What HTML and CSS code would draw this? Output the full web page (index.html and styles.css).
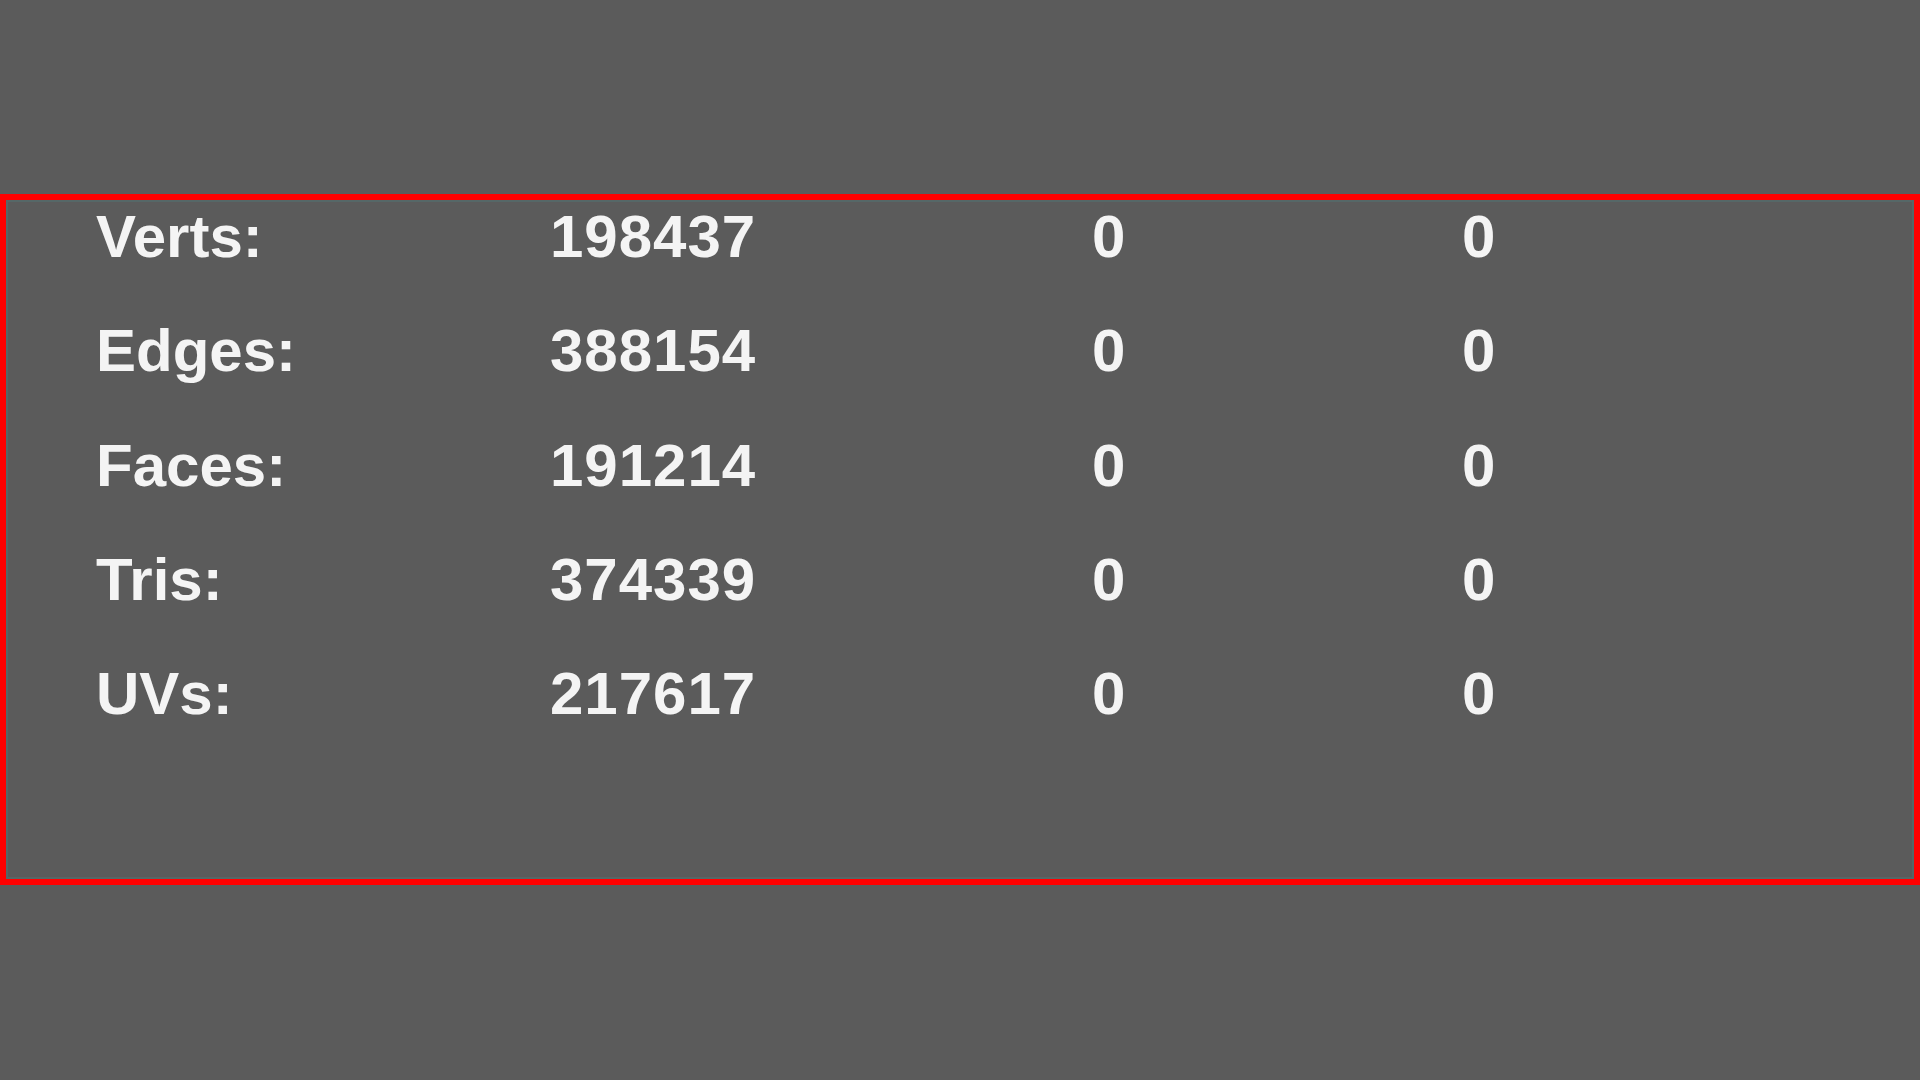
FILE: index.html
```html
<!DOCTYPE html>
<html lang="en">
   <head>
      <meta charset="UTF-8" />
      <title>Poly Count</title>
      <link rel="stylesheet" href="styles.css">
   </head>
   <body>
      <div class="stats-panel">
         <div class="stats-grid">
            <div class="label">Verts:</div>
            <div class="value count">198437</div>
            <div class="value">0</div>
            <div class="value">0</div>

            <div class="label">Edges:</div>
            <div class="value count">388154</div>
            <div class="value">0</div>
            <div class="value">0</div>

            <div class="label">Faces:</div>
            <div class="value count">191214</div>
            <div class="value">0</div>
            <div class="value">0</div>

            <div class="label">Tris:</div>
            <div class="value count">374339</div>
            <div class="value">0</div>
            <div class="value">0</div>

            <div class="label">UVs:</div>
            <div class="value count">217617</div>
            <div class="value">0</div>
            <div class="value">0</div>
         </div>
      </div>
   </body>
</html>
```

FILE: styles.css
```css
body {
background-color: #5b5b5b;
color: #f4f4f4;
font-family: "Liberation Sans", Arial, sans-serif;
margin: 0;
padding: 0;
height: 100vh;
overflow: hidden;
}
.stats-panel {
margin-top: 194px;
height: 691px;
box-sizing: border-box;
border: 6px solid #ff0000;
box-shadow: inset 0 0 0 2px #566767;
padding: 2px 0 0 90px;
}
.stats-grid {
display: grid;
grid-template-columns: 454px 542px 370px 1fr;
row-gap: 44.25px;
font-size: 60px;
font-weight: bold;
line-height: 70px;
}
.count {
letter-spacing: 1px;
}
```
